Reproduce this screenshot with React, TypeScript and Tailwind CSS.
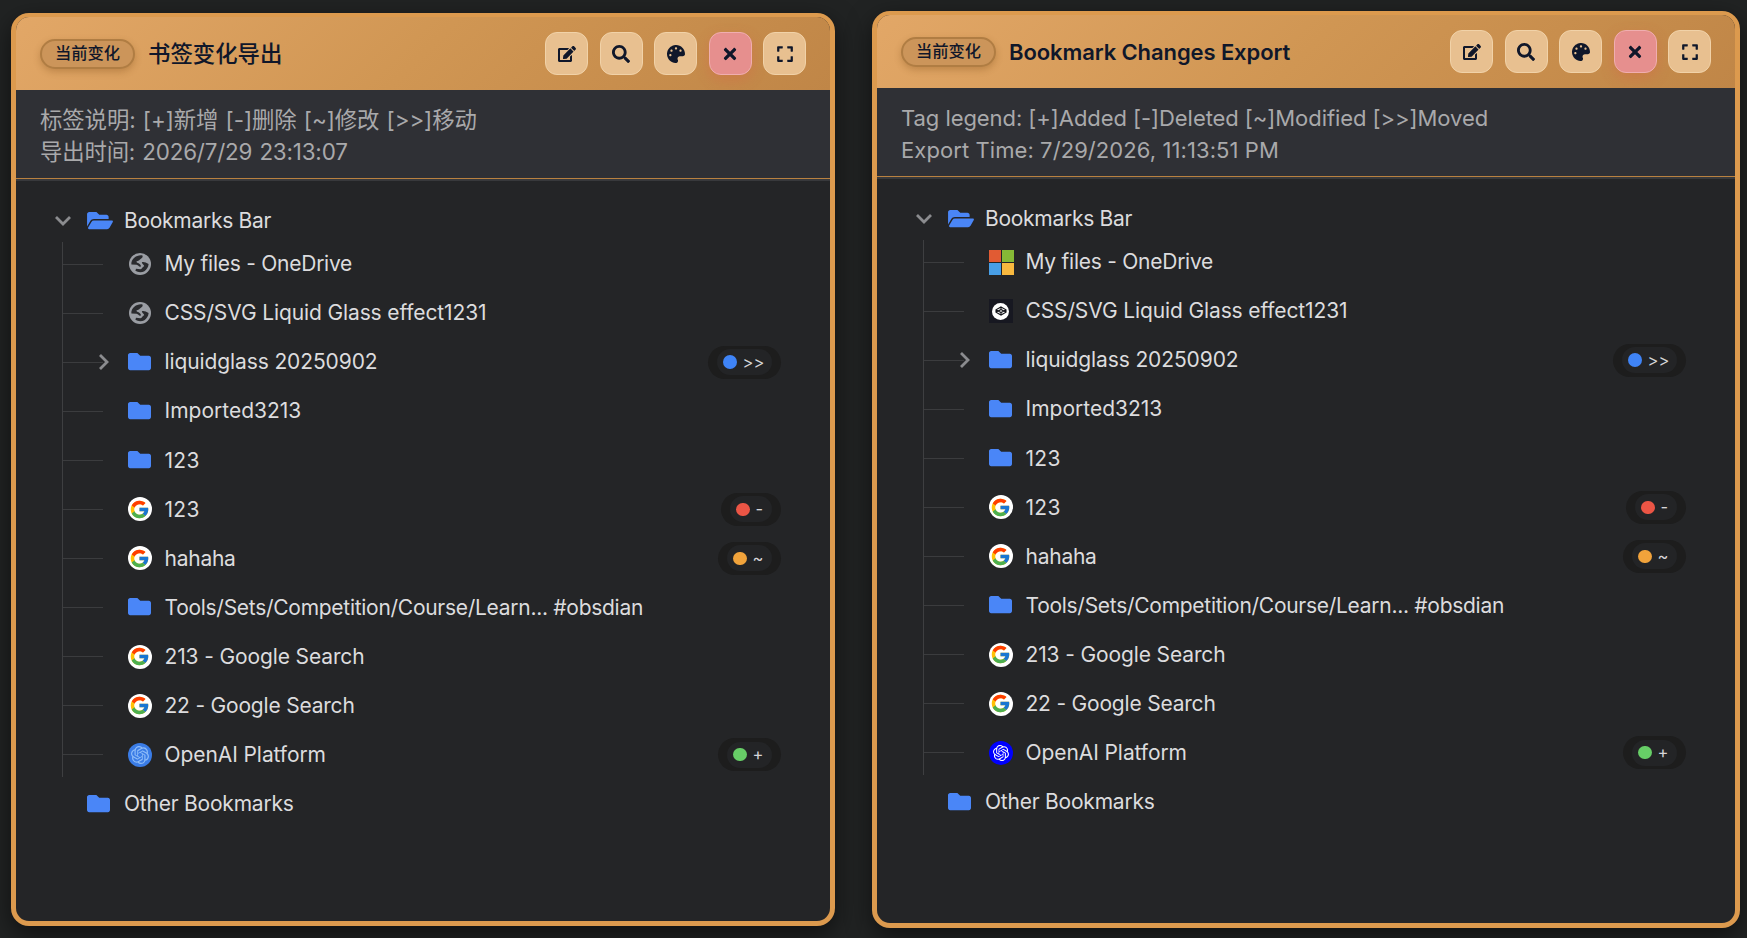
import React from 'react';
import { FaEdit, FaSearch, FaPalette, FaTimes, FaExpand, FaFolder, FaFolderOpen } from 'react-icons/fa';
import { FcGoogle } from 'react-icons/fc';
import { SiOpenai } from 'react-icons/si';
import clsx from 'clsx';

type IconKind = 'folder' | 'globe' | 'google' | 'microsoft' | 'codepen' | 'openai' | 'openaiLight';
type Change = 'moved' | 'deleted' | 'modified' | 'added';

interface Bookmark {
  title: string;
  icon: IconKind;
  tracking?: string;
  change?: Change;
  collapsed?: boolean;
}

interface PanelProps {
  title: string;
  legend: string;
  exportTime: string;
  items: Bookmark[];
  className: string;
  titleClass: string;
  legendClass: string;
  timeClass: string;
}

const buildItems = (first: IconKind, second: IconKind, last: IconKind): Bookmark[] => [
  { title: 'My files - OneDrive', icon: first, tracking: 'tracking-[-0.25px]' },
  { title: 'CSS/SVG Liquid Glass effect1231', icon: second, tracking: 'tracking-[-0.12px]' },
  { title: 'liquidglass 20250902', icon: 'folder', change: 'moved', collapsed: true, tracking: 'tracking-[-0.11px]' },
  { title: 'Imported3213', icon: 'folder' },
  { title: '123', icon: 'folder', tracking: 'tracking-[0.3px]' },
  { title: '123', icon: 'google', change: 'deleted', tracking: 'tracking-[0.3px]' },
  { title: 'hahaha', icon: 'google', change: 'modified', tracking: 'tracking-[-0.25px]' },
  { title: 'Tools/Sets/Competition/Course/Learn... #obsdian', icon: 'folder', tracking: 'tracking-[-0.28px]' },
  { title: '213 - Google Search', icon: 'google', tracking: 'tracking-[-0.13px]' },
  { title: '22 - Google Search', icon: 'google', tracking: 'tracking-[-0.2px]' },
  { title: 'OpenAI Platform', icon: last, change: 'added', tracking: 'tracking-[-0.08px]' },
];

const changes: Record<Change, { label: string; dot: string; width: string }> = {
  moved: { label: '>>', dot: 'bg-[#3f84f7]', width: 'w-[73px]' },
  deleted: { label: '-', dot: 'bg-[#eb5545]', width: 'w-[60px]' },
  modified: { label: '~', dot: 'bg-[#f1a33b]', width: 'w-[63px]' },
  added: { label: '+', dot: 'bg-[#67ce67]', width: 'w-[63px]' },
};

const ChangeBadge = ({ change }: { change: Change }) => {
  const { label, dot, width } = changes[change];
  return (
    <span className={clsx('flex h-[33px] items-center rounded-full bg-[#1d1d1d] px-[9px]', width)}>
      <span className="flex h-[26px] flex-1 items-center gap-[6px] rounded-full bg-[#232426] pl-[6px]">
        <span className={clsx('h-[13.5px] w-[13.5px] shrink-0 rounded-full', dot)} />
        <span className="text-[16.5px] leading-none text-[#d5d5d8]">{label}</span>
      </span>
    </span>
  );
};

const GlobeIcon = () => (
  <svg viewBox="0 0 24 24" className="h-6 w-6">
    <circle cx="12" cy="12" r="11" fill="#9a9da3" />
    <g fill="#2a2b2e">
      <path d="M14.5 3.4 C11 3 8.5 4 6.6 5.6 C4.2 7.6 3 10.2 3.4 12.6 L8.6 12.8 C10.4 13 10.6 15 12.4 14.8 C13.6 14.4 12.8 12.4 11 11.4 C9.6 10.8 8.6 10.8 8.4 9.8 C8.6 8.6 10.8 9.2 11.6 8 C12 6.4 15.4 6.4 14.5 3.4 Z" />
      <path d="M13.8 10.4 C15.4 9.6 18 10.6 20.6 12 C20.4 15 18.8 17.6 16.4 19.2 C13.8 20.6 10 20.6 7.4 18.8 L8 16.8 L12.4 17.2 C14.6 17 14 15.2 15.8 14.6 C17.2 13.8 14.6 12.4 13.8 10.4 Z" />
    </g>
  </svg>
);

const BookmarkIcon = ({ kind }: { kind: IconKind }) => {
  switch (kind) {
    case 'folder':
      return <FaFolder className="-mt-px h-[23px] w-[23px] text-[#4a86f7]" />;
    case 'globe':
      return <GlobeIcon />;
    case 'google':
      return (
        <span className="flex h-6 w-6 items-center justify-center rounded-full bg-white">
          <FcGoogle className="h-[21px] w-[21px]" />
        </span>
      );
    case 'microsoft':
      return (
        <span className="grid h-[25px] w-[25px] shrink-0 grid-cols-2 gap-px">
          <span className="bg-[#e15b33]" />
          <span className="bg-[#86b936]" />
          <span className="bg-[#489fe6]" />
          <span className="bg-[#f8b93f]" />
        </span>
      );
    case 'codepen':
      return (
        <span className="flex h-6 w-6 items-center justify-center bg-[#171821]">
          <span className="flex h-[17px] w-[17px] items-center justify-center rounded-full bg-white">
            <svg viewBox="0 0 24 24" className="h-3 w-3" fill="none" stroke="#111218" strokeWidth="2.2">
              <path d="M12 4 L22 9.5 V14.5 L12 20 L2 14.5 V9.5 Z M2 9.5 L12 15 L22 9.5 M2 14.5 L12 9 L22 14.5 M12 4 V9 M12 15 V20" />
            </svg>
          </span>
        </span>
      );
    case 'openai':
      return (
        <span className="flex h-6 w-6 items-center justify-center rounded-full bg-[#0000fe]">
          <SiOpenai className="h-4 w-4 text-white" />
        </span>
      );
    case 'openaiLight':
      return (
        <span className="flex h-6 w-6 items-center justify-center rounded-full bg-[#3a7ce6]">
          <SiOpenai className="h-[18px] w-[18px] text-[#8fbdf8]" />
        </span>
      );
  }
};

const Chevron = ({ className }: { className: string }) => (
  <svg viewBox="0 0 16 16" className={clsx('h-4 w-4', className)} fill="none" stroke="#8b8c8f" strokeWidth="2.8">
    <path d="M5 1 L12 8 L5 15" />
  </svg>
);

const actions = [
  { name: 'edit', Icon: FaEdit },
  { name: 'search', Icon: FaSearch },
  { name: 'theme', Icon: FaPalette },
  { name: 'close', Icon: FaTimes },
  { name: 'expand', Icon: FaExpand },
];

const BookmarkRow = ({ item }: { item: Bookmark }) => (
  <li className="flex h-11 items-center">
    <span className="h-px w-10 bg-[#3b3c3e]" />
    <span className="flex w-[25px] items-center">
      {item.collapsed && <Chevron className="-ml-[8px]" />}
    </span>
    <span className="flex w-[37px] items-center">
      <BookmarkIcon kind={item.icon} />
    </span>
    <span className={clsx('flex-1 whitespace-nowrap', item.tracking)}>{item.title}</span>
    {item.change && <ChangeBadge change={item.change} />}
  </li>
);

const ExportPanel = ({ title, legend, exportTime, items, className, titleClass, legendClass, timeClass }: PanelProps) => (
  <section
    className={clsx(
      'flex shrink-0 flex-col overflow-hidden rounded-[18px] border-[5px] border-t-4 border-[#dc9a4e] bg-[#242527] shadow-[0_8px_24px_rgba(0,0,0,0.55)]',
      className
    )}
  >
    <header className="flex h-[73px] shrink-0 items-center bg-linear-[135deg] from-[#e2a767] via-[#d09653] to-[#c08647] pr-6 pl-6 text-[#10172a]">
      <span className="flex h-[30px] w-[95px] items-center justify-center rounded-full border-2 border-[#b07d43] bg-[#cc955a] pb-px text-[16.3px] font-medium shadow-[0_3px_7px_rgba(120,70,20,0.3)]">
        当前变化
      </span>
      <h1 className={clsx('ml-[13px] flex-1 whitespace-nowrap', titleClass)}>{title}</h1>
      <div className="flex gap-[11.5px]">
        {actions.map(({ name, Icon }) => (
          <button
            key={name}
            className={clsx(
              'flex h-[43px] w-[43px] items-center justify-center rounded-[12px] border',
              name === 'close'
                ? 'border-[#f0aeb0] bg-[#e68f8e] shadow-[0_5px_14px_rgba(220,90,70,0.3)]'
                : 'border-[#f1d2a8] bg-[#e8c090]'
            )}
          >
            <Icon className="h-[18px] w-auto" />
          </button>
        ))}
      </div>
    </header>

    <div className="h-[88px] shrink-0 bg-[#2f3035] px-6 pt-[14px] leading-[32px] whitespace-nowrap text-[#a9a9ab]">
      <p className={legendClass}>{legend}</p>
      <p className={timeClass}>{exportTime}</p>
    </div>
    <div className="h-[3px] shrink-0 border-t border-[#b98140] bg-[#38393c]" />

    <div className="pt-[17px] pr-[49px] pl-[38px] text-[21px] text-[#dcdcde]">
      <div className="flex h-11 items-center">
        <Chevron className="ml-px rotate-90" />
        <FaFolderOpen className="mr-[11px] ml-4 h-[23px] w-[26px] text-[#4a86f7]" />
        <span className="pt-px tracking-[-0.28px]">Bookmarks Bar</span>
      </div>
      <ul className="ml-[7.5px] flex flex-col gap-[5.07px] border-l border-[#3e3f41]">
        {items.map((item, index) => (
          <BookmarkRow key={index} item={item} />
        ))}
      </ul>
      <div className="mt-[5px] flex h-11 items-center pl-[33px]">
        <FaFolder className="-mt-px mr-[14px] h-[23px] w-[23px] text-[#4a86f7]" />
        <span className="tracking-[-0.22px]">Other Bookmarks</span>
      </div>
    </div>
  </section>
);

export default function App() {
  return (
    <main className="flex h-[938px] w-[1747px] items-start overflow-hidden bg-[#212323] pl-[11px] font-[Inter,'Noto_Sans_CJK_SC',sans-serif]">
      <ExportPanel
        title="书签变化导出"
        legend="标签说明: [+]新增 [-]删除 [~]修改 [>>]移动"
        exportTime="导出时间: 2026/7/29 23:13:07"
        items={buildItems('globe', 'globe', 'openaiLight')}
        className="mt-[13px] h-[913px] w-[824px]"
        titleClass="text-[22.4px] font-medium"
        legendClass="text-[22.4px] tracking-[-0.08px] [word-spacing:1px]"
        timeClass="text-[22.4px] tracking-[-0.18px] [word-spacing:1px]"
      />
      <ExportPanel
        title="Bookmark Changes Export"
        legend="Tag legend: [+]Added [-]Deleted [~]Modified [>>]Moved"
        exportTime="Export Time: 7/29/2026, 11:13:51 PM"
        items={buildItems('microsoft', 'codepen', 'openai')}
        className="mt-[11px] ml-[37px] h-[917px] w-[868px]"
        titleClass="text-[22px] font-semibold tracking-[-0.1px] pt-px"
        legendClass="text-[22px] tracking-[-0.06px]"
        timeClass="text-[22px] tracking-[0.08px]"
      />
    </main>
  );
}
